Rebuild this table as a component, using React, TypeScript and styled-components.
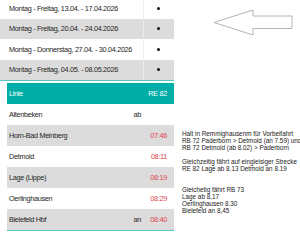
import React from "react";
import styled, { createGlobalStyle } from "styled-components";

const Global = createGlobalStyle`
  html, body { margin: 0; padding: 0; background: #ffffff; }
  body { width: 300px; height: 240px; overflow: hidden; }
`;

const TEAL = "#00aea8";
const TEAL_LINE = "#55c6c1";
const GRAY = "#dcdcdc";
const RED = "#e0474c";

const Page = styled.div`
  display: flex;
  width: 300px;
  height: 240px;
  overflow: hidden;
  background: #fff;
`;

const LeftCol = styled.div`
  width: 174px;
  flex: none;
  display: flex;
  flex-direction: column;
  font-family: "Liberation Sans", Arial, sans-serif;
  font-size: 7.3px;
  letter-spacing: -0.32px;
  color: #262626;
`;

const DateTable = styled.div`
  margin-top: -2px;
  border-bottom: 1px solid ${TEAL_LINE};
`;

const DateRow = styled.div<{ $shaded: boolean }>`
  display: grid;
  grid-template-columns: 143px 31px;
  height: 20.5px;
  background: ${(p) => (p.$shaded ? GRAY : "#fff")};
`;

const DateCell = styled.div`
  display: flex;
  align-items: center;
  padding-left: 9px;
  white-space: nowrap;
  overflow: hidden;
`;

const DotCell = styled.div`
  display: flex;
  align-items: center;
  justify-content: center;
  border-left: 1px solid #ececec;
`;

const Dot = styled.span`
  width: 3px;
  height: 3px;
  border-radius: 50%;
  background: #111;
  margin-left: -1px;
`;

const StopTable = styled.div`
  margin: 2px 0 0 7px;
  border-bottom: 1px solid ${TEAL_LINE};
`;

const StopRow = styled.div<{ $variant: "head" | "shaded" | "plain" }>`
  display: grid;
  grid-template-columns: 1fr 40px 30px;
  height: 21px;
  background: ${(p) =>
    p.$variant === "head" ? TEAL : p.$variant === "shaded" ? GRAY : "#fff"};
  color: ${(p) => (p.$variant === "head" ? "#fff" : "#262626")};
`;

const NameCell = styled.div`
  display: flex;
  align-items: center;
  padding-left: 2px;
  white-space: nowrap;
`;

const DirCell = styled.div`
  display: flex;
  align-items: center;
  justify-content: flex-end;
  padding-right: 3px;
`;

const TimeCell = styled.div<{ $red: boolean }>`
  display: flex;
  align-items: center;
  justify-content: flex-end;
  padding-right: 7px;
  white-space: nowrap;
  color: ${(p) => (p.$red ? RED : "inherit")};
`;

const RightCol = styled.div`
  flex: 1;
  display: flex;
  flex-direction: column;
  min-width: 0;
`;

const ArrowWrap = styled.div`
  margin: 9px 0 0 39px;
  height: 27px;
`;

const Notes = styled.div`
  margin-top: 93.5px;
  padding-left: 8px;
  font-family: "Liberation Sans", Arial, sans-serif;
  font-size: 6.35px;
  line-height: 7px;
  color: #222;
  white-space: nowrap;
`;

const NoteLine = styled.div`
  height: 7px;
`;

const dates = [
  "Montag - Freitag, 13.04. - 17.04.2026",
  "Montag - Freitag, 20.04. - 24.04.2026",
  "Montag - Donnerstag, 27.04. - 30.04.2026",
  "Montag - Freitag, 04.05. - 08.05.2026",
];

const stops: { name: string; dir: string; time: string }[] = [
  { name: "Altenbeken", dir: "ab", time: "" },
  { name: "Horn-Bad Meinberg", dir: "", time: "07:46" },
  { name: "Detmold", dir: "", time: "08:11" },
  { name: "Lage (Lippe)", dir: "", time: "08:19" },
  { name: "Oerlinghausen", dir: "", time: "08:29" },
  { name: "Bielefeld Hbf", dir: "an", time: "08:40" },
];

const notes = [
  "Halt in Remmighausenm für Vorbeifahrt",
  "RB 72 Paderborn > Detmold (an 7.59) und",
  "RB 72 Detmold (ab 8.02) > Paderborn",
  "",
  "Gleichzeitig fährt auf eingleisiger Strecke",
  "RE 82 Lage ab 8.13 Detmold an 8.19",
  "",
  "",
  "Gleichetig fährt RB 73",
  "Lage ab 8,17",
  "Oerlinghausen 8.30",
  "Bielefeld an 8,45",
];

export default function App() {
  return (
    <>
      <Global />
      <Page>
        <LeftCol>
          <DateTable>
            {dates.map((d, i) => (
              <DateRow key={d} $shaded={i % 2 === 1}>
                <DateCell>{d}</DateCell>
                <DotCell>
                  <Dot />
                </DotCell>
              </DateRow>
            ))}
          </DateTable>
          <StopTable>
            <StopRow $variant="head">
              <NameCell>Linie</NameCell>
              <DirCell />
              <TimeCell $red={false}>RE 82</TimeCell>
            </StopRow>
            {stops.map((s, i) => (
              <StopRow key={s.name} $variant={i % 2 === 1 ? "shaded" : "plain"}>
                <NameCell>{s.name}</NameCell>
                <DirCell>{s.dir}</DirCell>
                <TimeCell $red>{s.time}</TimeCell>
              </StopRow>
            ))}
          </StopTable>
        </LeftCol>
        <RightCol>
          <ArrowWrap>
            <svg width="80" height="27" viewBox="0 0 80 27">
              <polygon
                points="1,13.5 40,1 40,7 79,7 79,19.5 40,19.5 40,26"
                fill="#fff"
                stroke="#b4b4b4"
                strokeWidth="1"
              />
            </svg>
          </ArrowWrap>
          <Notes>
            {notes.map((n, i) => (
              <NoteLine key={i}>{n}</NoteLine>
            ))}
          </Notes>
        </RightCol>
      </Page>
    </>
  );
}
